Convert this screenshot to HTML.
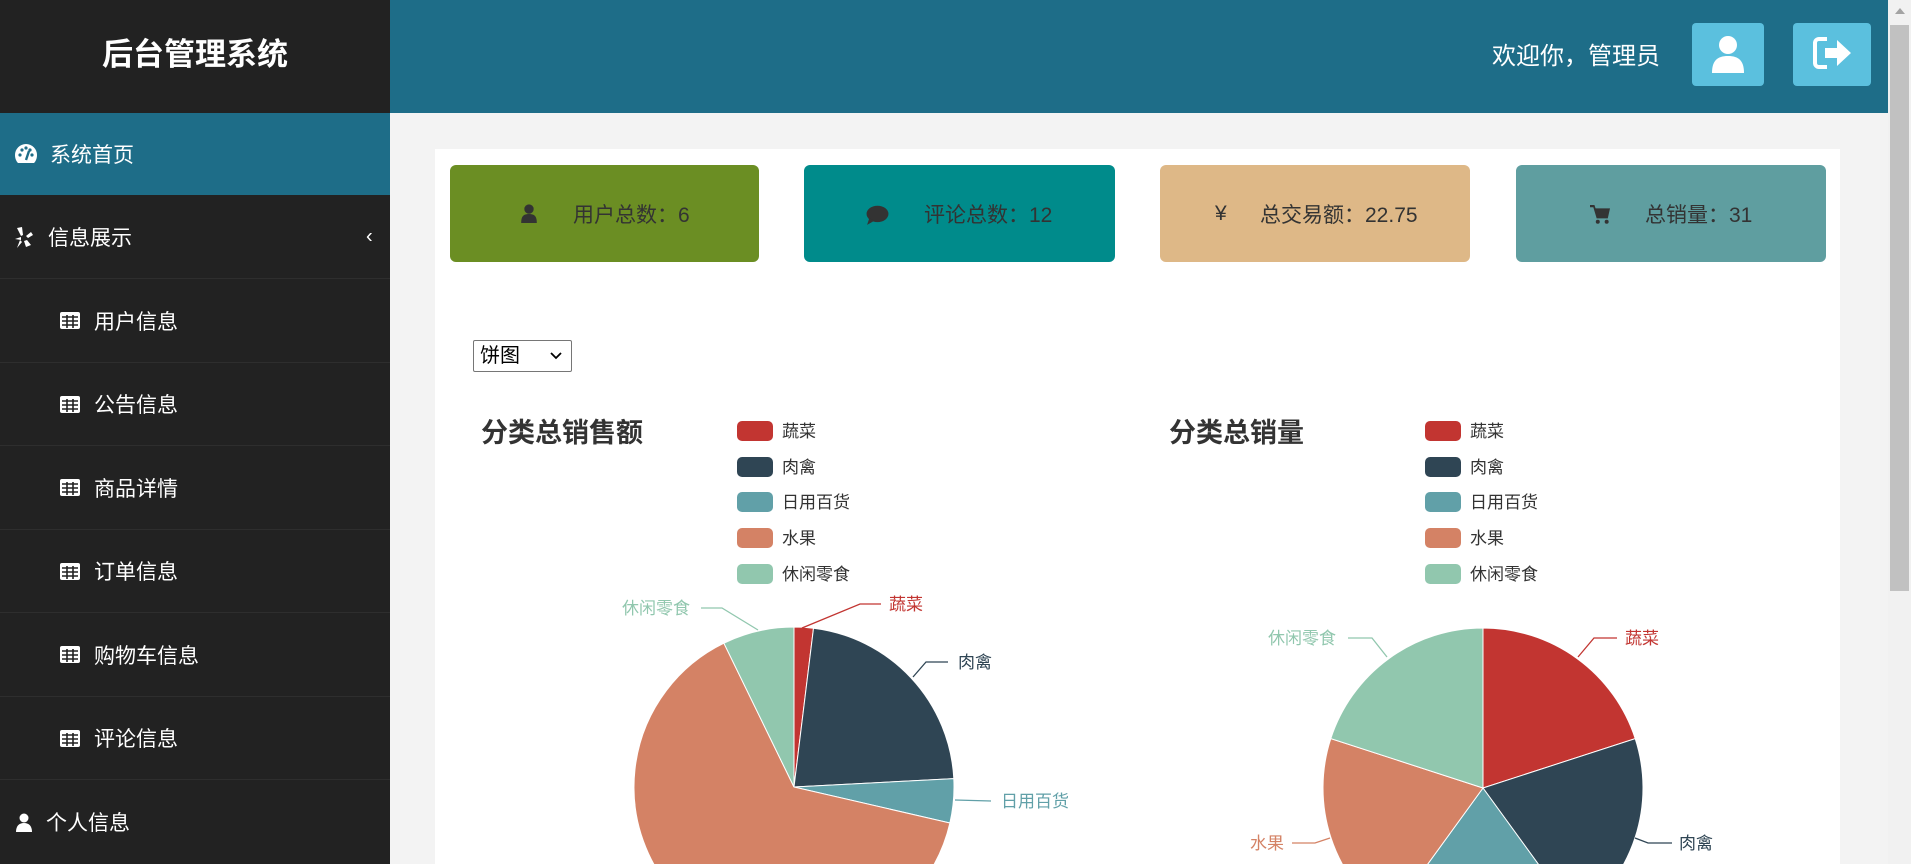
<!DOCTYPE html>
<html><head><meta charset="utf-8"><style>
*{margin:0;padding:0;box-sizing:border-box}
html,body{width:1911px;height:864px;overflow:hidden;background:#f3f3f3;font-family:"Liberation Sans","Noto Sans CJK SC",sans-serif}
.abs{position:absolute}
#side{left:0;top:0;width:390px;height:864px;background:#222}
#logo{left:0;top:0;width:390px;height:113px;color:#fff;font-weight:bold;font-size:31px;text-align:center;line-height:110px}
.item{position:absolute;left:0;width:390px;color:#fff;font-size:21px;border-bottom:1px solid #2e2e2e}
.item span{position:absolute;top:50%;transform:translateY(-50%)}
#top{left:390px;top:0;width:1498px;height:113px;background:#1e6d88}
.btn{top:23px;height:63px;background:#5bc0de;border-radius:4px}
#scroll{left:1888px;top:0;width:23px;height:864px;background:#f1f1f1}
#panel{left:435px;top:149px;width:1405px;height:715px;background:#fff}
.card{top:165px;height:97px;border-radius:6px;color:#333;font-size:21px}
.card span{position:absolute;top:50%;transform:translateY(-50%)}
</style></head><body>
<div id="side" class="abs">
<div id="logo" class="abs">后台管理系统</div>
<div class="item" style="top:113px;height:82px;background:#1e6d88;border:none">
 <svg class="abs" style="left:14px;top:30px" width="24" height="22" viewBox="0 0 24 22"><path d="M12 1A11 11 0 0 0 1 12c0 3 1 6 3 8h16c2-2 3-5 3-8A11 11 0 0 0 12 1z" fill="#fff"/><circle cx="6" cy="12" r="1.6" fill="#1e6d88"/><circle cx="8" cy="7" r="1.6" fill="#1e6d88"/><circle cx="12" cy="5" r="1.6" fill="#1e6d88"/><circle cx="16" cy="7" r="1.6" fill="#1e6d88"/><circle cx="18" cy="12" r="1.6" fill="#1e6d88"/><path d="M12 17l3-9" stroke="#1e6d88" stroke-width="2.4"/></svg>
 <span style="left:50px">系统首页</span></div>
<div class="item" style="top:195px;height:84px">
 <svg class="abs" style="left:14px;top:32px" width="20" height="22" viewBox="0 0 20 22"><path d="M3 1l4 8 2-1-1-8zM1 12l6 1v-3zM3 21l5-6-2-2zM12 20l-2-6 3-1 4 5zM12 9l2 2 5-3-2-3z" fill="#fff"/></svg>
 <span style="left:48px">信息展示</span><span style="left:366px;font-size:20px">‹</span></div>
<div class="item" style="top:279px;height:84px"><svg class="abs" style="left:60px;top:33px" width="20" height="17" viewBox="0 0 20 17"><rect width="20" height="17" rx="2" fill="#fff"/><path d="M2 5h16M2 9h16M2 13h16M7 3v13M13 3v13" stroke="#222" stroke-width="1.6"/></svg><span style="left:94px">用户信息</span></div>
<div class="item" style="top:363px;height:83px"><svg class="abs" style="left:60px;top:33px" width="20" height="17" viewBox="0 0 20 17"><rect width="20" height="17" rx="2" fill="#fff"/><path d="M2 5h16M2 9h16M2 13h16M7 3v13M13 3v13" stroke="#222" stroke-width="1.6"/></svg><span style="left:94px">公告信息</span></div>
<div class="item" style="top:446px;height:84px"><svg class="abs" style="left:60px;top:33px" width="20" height="17" viewBox="0 0 20 17"><rect width="20" height="17" rx="2" fill="#fff"/><path d="M2 5h16M2 9h16M2 13h16M7 3v13M13 3v13" stroke="#222" stroke-width="1.6"/></svg><span style="left:94px">商品详情</span></div>
<div class="item" style="top:530px;height:83px"><svg class="abs" style="left:60px;top:33px" width="20" height="17" viewBox="0 0 20 17"><rect width="20" height="17" rx="2" fill="#fff"/><path d="M2 5h16M2 9h16M2 13h16M7 3v13M13 3v13" stroke="#222" stroke-width="1.6"/></svg><span style="left:94px">订单信息</span></div>
<div class="item" style="top:613px;height:84px"><svg class="abs" style="left:60px;top:33px" width="20" height="17" viewBox="0 0 20 17"><rect width="20" height="17" rx="2" fill="#fff"/><path d="M2 5h16M2 9h16M2 13h16M7 3v13M13 3v13" stroke="#222" stroke-width="1.6"/></svg><span style="left:94px">购物车信息</span></div>
<div class="item" style="top:697px;height:83px"><svg class="abs" style="left:60px;top:33px" width="20" height="17" viewBox="0 0 20 17"><rect width="20" height="17" rx="2" fill="#fff"/><path d="M2 5h16M2 9h16M2 13h16M7 3v13M13 3v13" stroke="#222" stroke-width="1.6"/></svg><span style="left:94px">评论信息</span></div>
<div class="item" style="top:780px;height:84px;border:none"><svg class="abs" style="left:15px;top:33px" width="18" height="19" viewBox="0 0 18 19"><circle cx="9" cy="5" r="4.5" fill="#fff"/><path d="M1 19c0-6 3-9 8-9s8 3 8 9z" fill="#fff"/></svg><span style="left:46px">个人信息</span></div>
</div>

<div id="top" class="abs">
 <div class="abs" style="right:228px;top:42px;color:#fff;font-size:24px;line-height:30px">欢迎你，管理员</div>
 <div class="abs btn" style="left:1302px;width:72px"><svg class="abs" style="left:19px;top:12px" width="34" height="38" viewBox="0 0 34 38"><circle cx="17" cy="10" r="9" fill="#fff"/><path d="M1 38c0-12 5-17 16-17s16 5 16 17z" fill="#fff"/></svg></div>
 <div class="abs btn" style="left:1403px;width:78px"><svg class="abs" style="left:20px;top:12px" width="40" height="36" viewBox="0 0 40 36"><path d="M14 4H6a4 4 0 0 0-4 4v20a4 4 0 0 0 4 4h8" fill="none" stroke="#fff" stroke-width="4"/><path d="M12 13h12V5l14 13-14 13v-8H12z" fill="#fff"/></svg></div>
</div>
<div id="scroll" class="abs"><div class="abs" style="left:2px;top:25px;width:19px;height:566px;background:#c1c1c1"></div><div class="abs" style="left:7px;top:8px;border:5px solid transparent;border-bottom:6px solid #a3a3a3;border-top:none"></div></div>

<div id="panel" class="abs"></div>
<div class="abs card" style="left:450px;width:309px;background:#6b8e23"><svg style="position:absolute;left:71px;top:39px" width="16" height="19" viewBox="0 0 14 17"><circle cx="7" cy="4.5" r="4.2" fill="#333"/><path d="M0 17c0-6 2-8 7-8s7 2 7 8z" fill="#333"/></svg><span style="left:123px">用户总数：6</span></div>
<div class="abs card" style="left:804px;width:311px;background:#008b8b"><svg style="position:absolute;left:62px;top:40px" width="23" height="20" viewBox="0 0 21 18"><ellipse cx="10.5" cy="8" rx="10" ry="7.5" fill="#333"/><path d="M3 12l-2 6 7-4z" fill="#333"/></svg><span style="left:120px">评论总数：12</span></div>
<div class="abs card" style="left:1160px;width:310px;background:#deb887"><span style="left:55px">¥</span><span style="left:100px">总交易额：22.75</span></div>
<div class="abs card" style="left:1516px;width:310px;background:#5f9ea0"><svg style="position:absolute;left:74px;top:40px" width="20" height="19" viewBox="0 0 18 17"><path d="M0 0h4l1 3h13l-2 9H6L3 2H0z" fill="#333"/><circle cx="7" cy="15" r="1.8" fill="#333"/><circle cx="15" cy="15" r="1.8" fill="#333"/></svg><span style="left:129px">总销量：31</span></div>

<div class="abs" style="left:473px;top:340px;width:99px;height:32px;border:1px solid #767676;border-radius:2px;background:#fff;font-size:20px;line-height:30px;padding-left:6px;color:#000">饼图<svg class="abs" style="left:76px;top:11px" width="12" height="8" viewBox="0 0 12 8"><path d="M1 1l5 5 5-5" fill="none" stroke="#000" stroke-width="1.8"/></svg></div>

<div class="abs" style="left:0;top:0;width:1888px;height:864px;overflow:hidden">
<svg width="1888" height="864" style="display:block" font-family="Liberation Sans, Noto Sans CJK SC, sans-serif">
 <g font-size="27" font-weight="bold" fill="#333"><text x="481" y="442">分类总销售额</text><text x="1169" y="442">分类总销量</text></g>
 <g font-size="17" fill="#333">
  <rect x="737" y="421" width="36" height="20" rx="5" fill="#c23531"/><text x="782" y="437">蔬菜</text>
  <rect x="737" y="457" width="36" height="20" rx="5" fill="#2f4554"/><text x="782" y="473">肉禽</text>
  <rect x="737" y="492" width="36" height="20" rx="5" fill="#61a0a8"/><text x="782" y="508">日用百货</text>
  <rect x="737" y="528" width="36" height="20" rx="5" fill="#d48265"/><text x="782" y="544">水果</text>
  <rect x="737" y="564" width="36" height="20" rx="5" fill="#91c7ae"/><text x="782" y="580">休闲零食</text>
  <rect x="1425" y="421" width="36" height="20" rx="5" fill="#c23531"/><text x="1470" y="437">蔬菜</text>
  <rect x="1425" y="457" width="36" height="20" rx="5" fill="#2f4554"/><text x="1470" y="473">肉禽</text>
  <rect x="1425" y="492" width="36" height="20" rx="5" fill="#61a0a8"/><text x="1470" y="508">日用百货</text>
  <rect x="1425" y="528" width="36" height="20" rx="5" fill="#d48265"/><text x="1470" y="544">水果</text>
  <rect x="1425" y="564" width="36" height="20" rx="5" fill="#91c7ae"/><text x="1470" y="580">休闲零食</text>
 </g>
 <g stroke="#fff" stroke-width="1">
  <path d="M794 787L794 627A160 160 0 0 1 813.5 628.2Z" fill="#c23531"/>
  <path d="M794 787L813.5 628.2A160 160 0 0 1 953.8 778.6Z" fill="#2f4554"/>
  <path d="M794 787L953.8 778.6A160 160 0 0 1 949.9 823Z" fill="#61a0a8"/>
  <path d="M794 787L949.9 823A160 160 0 1 1 723.9 643.2Z" fill="#d48265"/>
  <path d="M794 787L723.9 643.2A160 160 0 0 1 794 627Z" fill="#91c7ae"/>
  <path d="M1483 788L1483 628A160 160 0 0 1 1635.2 738.6Z" fill="#c23531"/>
  <path d="M1483 788L1635.2 738.6A160 160 0 0 1 1577 917.4Z" fill="#2f4554"/>
  <path d="M1483 788L1577 917.4A160 160 0 0 1 1389 917.4Z" fill="#61a0a8"/>
  <path d="M1483 788L1389 917.4A160 160 0 0 1 1330.8 738.6Z" fill="#d48265"/>
  <path d="M1483 788L1330.8 738.6A160 160 0 0 1 1483 628Z" fill="#91c7ae"/>
 </g>
 <g fill="none" stroke-width="1.3">
  <path d="M802 628L860 604H881" stroke="#c23531"/>
  <path d="M913 677L926 662H948" stroke="#2f4554"/>
  <path d="M955 800L991 801" stroke="#61a0a8"/>
  <path d="M701 608H722L758 630" stroke="#91c7ae"/>
  <path d="M1578 657L1594 638H1617" stroke="#c23531"/>
  <path d="M1348 638H1372L1387 657" stroke="#91c7ae"/>
  <path d="M1292 843H1315L1330 838" stroke="#d48265"/>
  <path d="M1635 838L1648 843H1672" stroke="#2f4554"/>
 </g>
 <g font-size="17">
  <text x="889" y="610" fill="#c23531">蔬菜</text>
  <text x="958" y="668" fill="#2f4554">肉禽</text>
  <text x="1001" y="807" fill="#61a0a8">日用百货</text>
  <text x="622" y="614" fill="#91c7ae">休闲零食</text>
  <text x="1625" y="644" fill="#c23531">蔬菜</text>
  <text x="1268" y="644" fill="#91c7ae">休闲零食</text>
  <text x="1250" y="849" fill="#d48265">水果</text>
  <text x="1679" y="849" fill="#2f4554">肉禽</text>
 </g>
</svg>
</div>
</body></html>
